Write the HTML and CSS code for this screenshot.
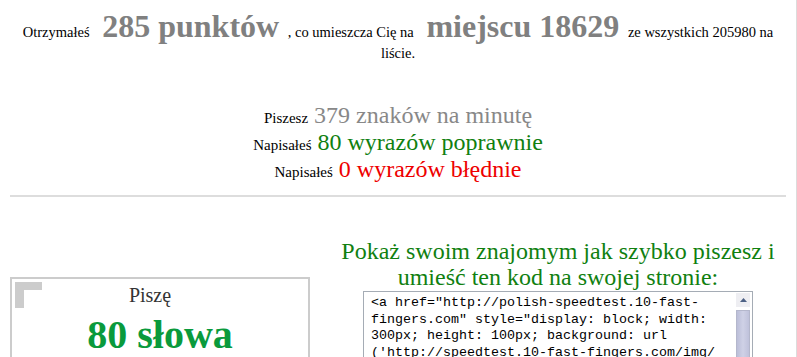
FILE: index.html
```html
<!DOCTYPE html>
<html lang="pl">
<head>
  <meta charset="UTF-8">
  <title>Wynik testu</title>
  <link rel="stylesheet" href="styles.css">
</head>
<body>
  <div class="page">
    <p class="score">
      Otrzymałeś <span class="big">285 punktów</span> , co umieszcza Cię na <span class="big">miejscu 18629</span> ze wszystkich 205980 na liście.
    </p>

    <div class="stats">
      <div><span class="label">Piszesz</span> <span class="gray">379 znaków na minutę</span></div>
      <div><span class="label">Napisałeś</span> <span class="green">80 wyrazów poprawnie</span></div>
      <div><span class="label">Napisałeś</span> <span class="red">0 wyrazów błędnie</span></div>
    </div>

    <hr class="line">

    <div class="share">
      <div class="left">
        <div class="badge">
          <span class="corner"></span>
          <div class="badge-top">Piszę</div>
          <div class="badge-num">80 słowa</div>
        </div>
      </div>
      <div class="right">
        <h2 class="share-title">Pokaż swoim znajomym jak szybko piszesz i umieść ten kod na swojej stronie:</h2>
        <div class="code-box">
          <div class="code">&lt;a href="http://polish-speedtest.10-fast-fingers.com" style="display: block; width: 300px; height: 100px; background: url<wbr>('http://speedtest.10-fast-fingers.com/img/<wbr>userimg/pl/80.png') no-repeat;"&gt;&lt;/a&gt;</div>
          <div class="scrollbar">
            <div class="scroll-btn">
              <svg width="7" height="4" viewBox="0 0 7 4"><path d="M0 4 L3.5 0 L7 4 Z" fill="#4d6185"/></svg>
            </div>
            <div class="scroll-thumb"></div>
          </div>
        </div>
      </div>
    </div>
  </div>
</body>
</html>
```

FILE: styles.css
```css
html, body {
  margin: 0;
  padding: 0;
  background: #fff;
}

body {
  font-family: "Liberation Serif", "Times New Roman", serif;
  font-size: 14.5px;
  color: #000;
}

.page {
  width: 776px;
  height: 357px;
  overflow: hidden;
  padding: 8px 10px 0 10px;
  border-right: 1px solid #dcdcdc;
}

.score {
  margin: 0;
  text-align: center;
}

.big {
  font-size: 32px;
  font-weight: bold;
  color: #808080;
  margin: 0 5px 0 9px;
}

.stats {
  margin-top: 40px;
  text-align: center;
}

.stats div {
  font-size: 24px;
  line-height: 27px;
}

.label {
  font-size: 15px;
  line-height: normal;
}

.gray {
  color: #888;
}

.green {
  color: #108010;
}

.red {
  color: #e00;
}

.line {
  margin: 12px 0 0 0;
  height: 0;
  border: none;
  border-top: 2px solid #ddd;
}

.share {
  display: flex;
  margin-top: 41px;
}

.left {
  width: 320px;
}

.right {
  flex: 1;
  text-align: center;
}

.badge {
  position: relative;
  margin-top: 39px;
  width: 296px;
  height: 96px;
  border: 2px solid #ccc;
  text-align: center;
}

.corner {
  position: absolute;
  left: 3px;
  top: 3px;
  width: 18px;
  height: 18px;
  border-top: 8px solid #ccc;
  border-left: 9px solid #ccc;
}

.badge-top {
  font-size: 20px;
  color: #333;
  line-height: 23px;
  padding: 5px 20px 0 0;
}

.badge-num {
  font-size: 40px;
  font-weight: bold;
  color: #0a9a3c;
  line-height: 46px;
  margin-top: 5px;
}

.share-title {
  margin: 0;
  font-size: 24px;
  font-weight: normal;
  line-height: 26px;
  color: #108010;
}

.code-box {
  display: flex;
  width: 388px;
  height: 100px;
  margin: 1px auto 0 auto;
  border: 1px solid #a5acb5;
  text-align: left;
}

.code {
  flex: 1;
  padding: 3px 2px 0 7px;
  font-family: "Liberation Mono", "Courier New", monospace;
  font-size: 13.33px;
  line-height: 16.67px;
  white-space: pre-wrap;
  overflow: hidden;
}

.scrollbar {
  width: 16px;
  padding-right: 1px;
  display: flex;
  flex-direction: column;
}

.scroll-btn {
  height: 16px;
  display: flex;
  align-items: center;
  justify-content: center;
  background: #eeeef2;
  border: 1px solid #fff;
  box-sizing: border-box;
}

.scroll-thumb {
  flex: 1;
  margin-top: 1px;
  border: 1px solid #fff;
  outline: 1px solid #b4b7cc;
  outline-offset: -2px;
  background: linear-gradient(to right, #b8bbd6, #cfd1e6 50%, #bcbfd9);
}
```
